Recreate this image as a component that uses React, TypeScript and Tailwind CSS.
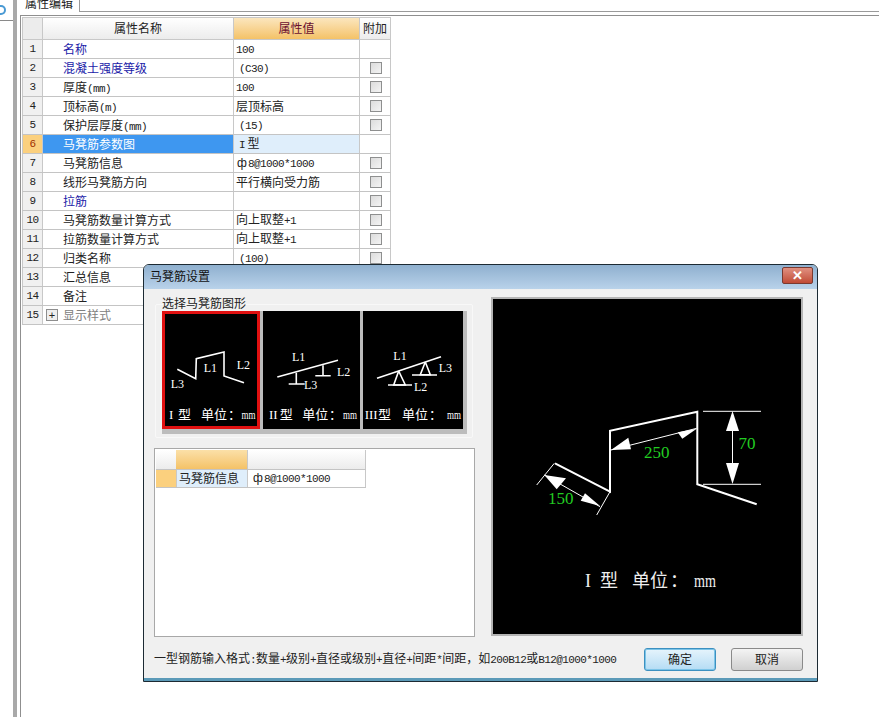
const font = { fontFamily: '"Liberation Sans", "Noto Sans CJK SC", sans-serif' };

const rows = [
  { name: "名称", value: "100", blue: true, check: false },
  { name: "混凝土强度等级", value: "(C30)", indent: true, blue: true, check: true },
  { name: "厚度(mm)", value: "100", check: true },
  { name: "顶标高(m)", value: "层顶标高", check: true },
  { name: "保护层厚度(mm)", value: "(15)", indent: true, check: true },
  { name: "马凳筋参数图", value: "I\u2009型", indent: true, selected: true, check: false },
  { name: "马凳筋信息", value: "ф8@1000*1000", check: true },
  { name: "线形马凳筋方向", value: "平行横向受力筋", check: true },
  { name: "拉筋", value: "", blue: true, check: true },
  { name: "马凳筋数量计算方式", value: "向上取整+1", check: true },
  { name: "拉筋数量计算方式", value: "向上取整+1", check: true },
  { name: "归类名称", value: "(100)", indent: true, check: true },
  { name: "汇总信息", value: "", check: true },
  { name: "备注", value: "", check: true },
  { name: "显示样式", value: "", plus: true, check: false },
];

// half width latin like the old bitmap font, full width chinese
const Mixed = ({ text }: { text: string }) => (
  <>
    {text.split(/([\x00-\x7f]+|ф)/).map((part, i) => {
      if (part === "ф") return <span key={i} className="inline-block w-[12px] text-center">ф</span>;
      if (/^[\x00-\x7f]+$/.test(part)) return <span key={i} className="font-['Liberation_Mono'] text-[11px] tracking-[-0.6px] whitespace-pre">{part}</span>;
      return <span key={i}>{part}</span>;
    })}
  </>
);

const Checkbox = () => (
  <span className="block w-[12px] h-[12px] ml-[1px] border border-[#8e8f8f] bg-gradient-to-br from-[#dcdcdc] to-[#f4f4f4]" />
);

const Thumb = ({ box, children }: { box: string; children: React.ReactNode }) => (
  <svg viewBox={box} className="block w-full h-full" fill="none" stroke="#fff" strokeWidth="1.6">
    {children}
  </svg>
);

const ThumbText = ({ x, y, children }: { x: number; y: number; children: React.ReactNode }) => (
  <text x={x} y={y} textAnchor="middle" fill="#fff" stroke="none" fontSize="12" fontFamily="Liberation Serif, serif">
    {children}
  </text>
);

const Caption = ({ kind, at }: { kind: string; at: number[] }) => (
  <g fill="#fff" stroke="none" fontSize="13" fontFamily="Liberation Serif, Noto Sans CJK SC, serif">
    <text x={at[0]} y={418}>{kind}</text>
    <text x={at[1]} y={418}>型</text>
    <text x={at[2]} y={418}>单位</text>
    <text x={at[3]} y={418}>：</text>
    <text x={at[4]} y={418} textLength={14} lengthAdjust="spacingAndGlyphs">mm</text>
  </g>
);

const App = () => {
  return (
    <div className="relative w-[879px] h-[717px] bg-white overflow-hidden text-[12px] text-[#222]" style={font}>
      <div className="flex h-full">
        {/* left strip */}
        <div className="w-[13px] shrink-0 h-full flex flex-col">
          <div className="h-[21px] border-b border-[#8a8a8a] flex items-center">
            <span className="block w-[6px] h-[10px] rounded-r-full border-[2px] border-l-0 border-[#4a9ad4]" />
          </div>
        </div>
        <div className="w-[4px] shrink-0 bg-[#a9a9a9]" />
        <div className="w-[3px] shrink-0 bg-white" />
        <div className="flex-1 min-w-0 flex flex-col">
          {/* tab strip */}
          <div className="flex h-[12px] items-end shrink-0">
            <div className="w-[60px] h-[12px] border-r border-[#9a9a9a] pl-[5px] text-[12px] leading-[8px] overflow-hidden">属性编辑</div>
            <div className="flex-1 border-b border-[#9a9a9a]" />
          </div>
          <div className="flex-1 border-l border-t border-[#8f8f8f] mt-[3px] pt-[1px] pl-[1px]">
            {/* property table */}
            <div className="w-[369px] text-[12px]">
              <div className="flex h-[23px] border-y border-[#c8c8c8]">
                <div className="w-[21px] border-x border-[#c8c8c8] bg-[#ececec]" />
                <div className="w-[191px] border-r border-[#c8c8c8] bg-gradient-to-b from-white to-[#ececec] flex items-center justify-center">属性名称</div>
                <div className="w-[126px] border-r border-[#c8c8c8] bg-gradient-to-b from-[#fbe6bd] to-[#f4c266] flex items-center justify-center text-[#6a1030]">属性值</div>
                <div className="w-[31px] border-r border-[#c8c8c8] bg-gradient-to-b from-white to-[#ececec] flex items-center justify-center">附加</div>
              </div>
              {rows.map((row, i) => (
                <div key={i} className="flex h-[19px] border-b border-[#c4c4c4]">
                  <div className={`w-[21px] border-x border-[#c8c8c8] flex items-center justify-center font-['Liberation_Mono'] text-[11px] tracking-[-0.6px] ${row.selected ? "bg-[#fbd07e] text-[#a03000]" : "bg-[#f0f0f0]"}`}>{i + 1}</div>
                  <div className={`w-[191px] border-r border-[#c8c8c8] flex items-center pt-[2px] ${row.selected ? "bg-[#3e97f0] text-white" : ""} ${row.blue ? "text-[#1a1aa8]" : ""} ${row.plus ? "text-[#808080]" : ""}`}>
                    {row.plus ? (
                      <span className="w-[12px] h-[12px] ml-[3px] mr-[5px] -mt-[2px] border border-[#8e8e8e] bg-[#eee] text-[#222] flex items-center justify-center text-[11px] leading-none">+</span>
                    ) : (
                      <span className="w-[20px]" />
                    )}
                    <span><Mixed text={row.name} /></span>
                  </div>
                  <div className={`w-[126px] border-r border-[#c8c8c8] flex items-center whitespace-pre pt-[1px] ${row.indent ? "pl-[5px]" : "pl-[2px]"} ${row.selected ? "bg-[#dfeefb]" : ""}`}><span><Mixed text={row.value} /></span></div>
                  <div className="w-[31px] border-r border-[#c8c8c8] flex items-center justify-center">{row.check && <Checkbox />}</div>
                </div>
              ))}
            </div>
          </div>
        </div>
      </div>

      {/* dialog */}
      <div className="absolute left-[143px] top-[264px] w-[675px] h-[418px] border border-[#1c2a33] rounded-t-[6px] flex flex-col bg-[#f0f0f0] overflow-hidden">
        <div className="h-[24px] shrink-0 bg-gradient-to-b from-[#8fb0cf] to-[#b9d2ea] flex items-center justify-between pl-[6px] pr-[4px] text-[12px] text-[#111]">
          <span>马凳筋设置</span>
          <span className="w-[31px] h-[17px] mb-[3px] rounded-[2px] border border-[#7a3a30] bg-gradient-to-b from-[#e09080] to-[#c04a35] text-white flex items-center justify-center text-[13px] font-bold leading-none">✕</span>
        </div>
        <div className="flex-1 flex pl-[10px] pr-[14px] pt-[8px]">
          <div className="w-[321px] shrink-0 flex flex-col">
            {/* shape picker */}
            <div className="relative h-[134px] mt-[7px] ml-[1px] w-[318px] border border-[#f8f8f8] rounded-[2px] pl-[6px] pt-[6px]">
              <span className="absolute left-[6px] -top-[8px] leading-[14px] text-[12px]">选择马凳筋图形</span>
              <div className="flex w-[305px] h-[123px] bg-[#bcbcbc] pb-[5px] pr-[4px] gap-[3px]">
                <div className="w-[98px] bg-black border-[3px] border-[#e01010]">
                  <Thumb box="165 313 92 112">
                    <polyline points="177.3,368.3 195.7,377.7 196.3,357.7 224,351 224,375 244,381.7" />
                    <ThumbText x={210.3} y={371}>L1</ThumbText>
                    <ThumbText x={243.3} y={367.7}>L2</ThumbText>
                    <ThumbText x={177.3} y={387.3}>L3</ThumbText>
                    <Caption kind="I" at={[169, 178, 201, 228, 241.5]} />
                  </Thumb>
                </div>
                <div className="w-[97px] bg-black">
                  <Thumb box="263 310 97 118">
                    <line x1="277.3" y1="376" x2="338" y2="359.3" />
                    <polyline points="296.3,371.7 296.3,383" />
                    <line x1="288.7" y1="383" x2="304.7" y2="383" />
                    <line x1="323" y1="364.3" x2="323" y2="374.7" />
                    <line x1="315.3" y1="374.7" x2="330.7" y2="374.7" />
                    <ThumbText x={298.7} y={360}>L1</ThumbText>
                    <ThumbText x={343.7} y={375}>L2</ThumbText>
                    <ThumbText x={310.7} y={388}>L3</ThumbText>
                    <Caption kind="II" at={[269, 279.7, 302.3, 329, 343]} />
                  </Thumb>
                </div>
                <div className="w-[100px] bg-black">
                  <Thumb box="364 310 100 118">
                    <line x1="378" y1="377.3" x2="442" y2="355.7" />
                    <polyline points="399.7,370 394.7,384 406.3,384 399.7,370" />
                    <line x1="389" y1="384" x2="413" y2="384" />
                    <polyline points="426.3,361 421.3,373.7 431.3,373.7 426.3,361" />
                    <line x1="413" y1="374" x2="438" y2="374" />
                    <ThumbText x={401} y={359}>L1</ThumbText>
                    <ThumbText x={446.3} y={371}>L3</ThumbText>
                    <ThumbText x={421.7} y={390}>L2</ThumbText>
                    <Caption kind="III" at={[365.7, 379, 403, 430, 448]} />
                  </Thumb>
                </div>
              </div>
            </div>
            {/* info grid */}
            <div className="mt-[10px] h-[189px] w-[321px] border border-[#a8a8a8] bg-white pt-[1px] pl-[1px]">
              <div className="flex h-[19px] w-[210px]">
                <div className="w-[20px] bg-gradient-to-b from-white to-[#ececec]" />
                <div className="w-[72px] bg-gradient-to-b from-[#fbe0a8] to-[#f4c266] border-r border-[#c8c8c8]" />
                <div className="w-[118px] bg-gradient-to-b from-white to-[#ececec] border-r border-[#c8c8c8]" />
              </div>
              <div className="flex h-[19px] w-[210px] border-y border-[#c4c4c4]">
                <div className="w-[20px] bg-[#fbd07e]" />
                <div className="w-[72px] bg-[#dfeefb] border-x border-[#c8c8c8] pl-[2px] flex items-center">马凳筋信息</div>
                <div className="w-[118px] border-r border-[#c8c8c8] pl-[4px] flex items-center"><span><Mixed text="ф8@1000*1000" /></span></div>
              </div>
            </div>
            <div className="mt-[14px] w-[480px] leading-[16px] whitespace-nowrap"><Mixed text="一型钢筋输入格式:数量+级别+直径或级别+直径+间距*间距，如200B12或B12@1000*1000" /></div>
          </div>
          <div className="ml-[16px] flex-1 flex flex-col">
            {/* preview */}
            <div className="h-[339px] border-[2px] border-[#b4b4b4] bg-black">
              <svg viewBox="493 299 308 335" className="block w-full h-full" fill="none" stroke="#fff">
                <polyline strokeWidth="2" points="555,463.3 610,491.7 610,430.7 697.3,411.7 697.3,484.3 756.7,504.3" />
                <line x1="703" y1="411.3" x2="761" y2="411.3" />
                <line x1="703" y1="484.3" x2="761" y2="484.3" />
                <line x1="732.5" y1="420" x2="732.5" y2="475" />
                <polygon fill="#fff" stroke="none" points="732.5,411 726,431 739,431" />
                <polygon fill="#fff" stroke="none" points="732.5,484 726,463 739,463" />
                <line x1="611" y1="450" x2="696.7" y2="428.3" />
                <polygon fill="#fff" stroke="none" points="611,450 628.3,437.7 631,449.3" />
                <polygon fill="#fff" stroke="none" points="696.7,428.7 677.7,432.3 682.3,438.7" />
                <line x1="554.3" y1="463.3" x2="536.7" y2="485" />
                <line x1="610" y1="491.7" x2="596.7" y2="515" />
                <line x1="544.3" y1="475" x2="600" y2="506.7" />
                <polygon fill="#fff" stroke="none" points="544.3,475 566,478.3 556.7,489.3" />
                <polygon fill="#fff" stroke="none" points="600,506 585,493.3 580.7,500.7" />
                <g fill="#22cc22" stroke="none" fontSize="17" fontFamily="Liberation Serif, serif" textAnchor="middle">
                  <text x="656.7" y="458">250</text>
                  <text x="747" y="449">70</text>
                  <text x="560.7" y="504">150</text>
                </g>
                <g fill="#eee" stroke="none" fontSize="18" fontFamily="Liberation Serif, Noto Sans CJK SC, serif">
                  <text x="585" y="587">I</text>
                  <text x="600" y="587">型</text>
                  <text x="632" y="587">单位</text>
                  <text x="670" y="587">：</text>
                  <text x="694" y="587" textLength={22} lengthAdjust="spacingAndGlyphs">mm</text>
                </g>
              </svg>
            </div>
            <div className="mt-[12px] flex justify-end gap-[15px] text-[12px]">
              <button className="w-[72px] h-[23px] rounded-[3px] border border-[#3c90c0] bg-gradient-to-b from-[#e6f4fc] to-[#b4dcf4] shadow-[inset_0_0_0_1px_#7cc4e8]">确定</button>
              <button className="w-[72px] h-[23px] rounded-[3px] border border-[#8a8a8a] bg-gradient-to-b from-[#f4f4f4] to-[#d0d0d0]">取消</button>
            </div>
          </div>
        </div>
        <div className="h-[3px] bg-[#5b9ab8] shrink-0" />
      </div>
    </div>
  );
};

export default App;
